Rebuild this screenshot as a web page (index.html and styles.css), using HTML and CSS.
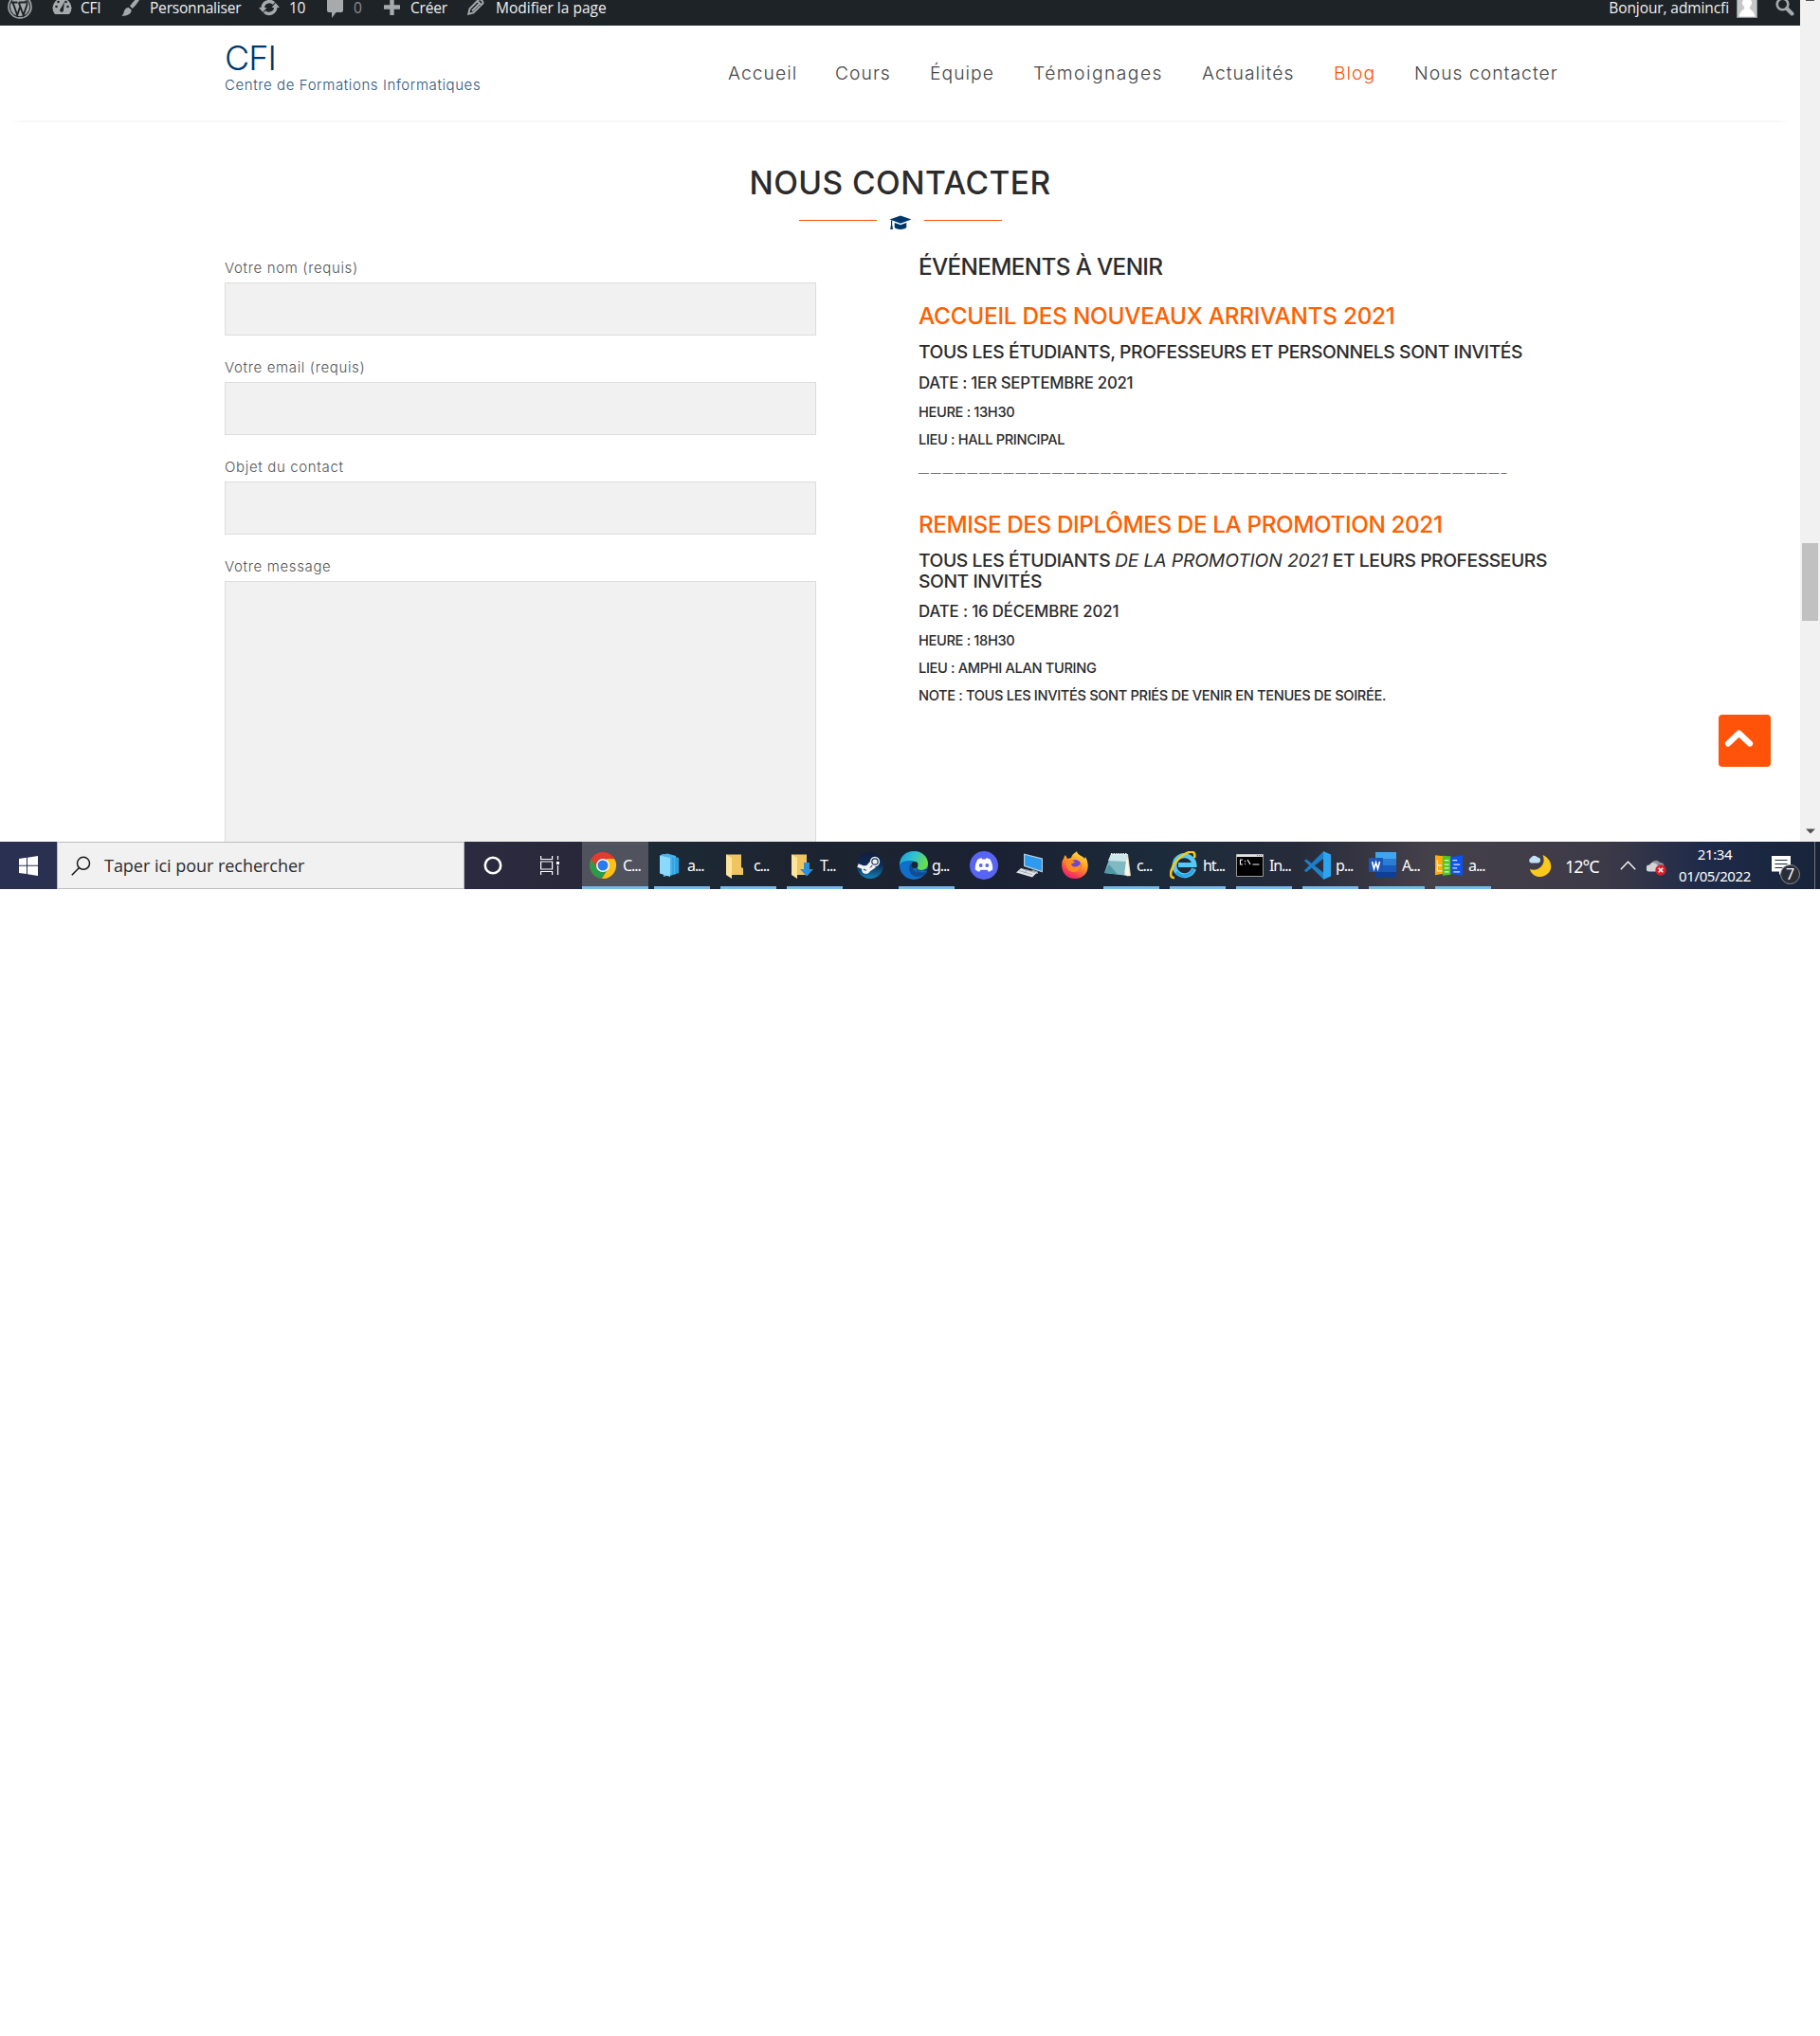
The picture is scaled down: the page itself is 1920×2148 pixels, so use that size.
FILE: index.html
```html
<!DOCTYPE html>
<html lang="fr">
<head>
<meta charset="utf-8">
<title>CFI – Nous contacter</title>
<link rel="stylesheet" href="styles.css">
</head>
<body>
<div class="screen">
  <div class="viewport">
    <div class="page">
      <div class="adminbar">
        <div class="ab-item ab-logo">
          <svg width="26" height="26" viewBox="0 0 26 26"><circle cx="13" cy="13" r="12" fill="none" stroke="#a7aaad" stroke-width="1.6"/><circle cx="13" cy="13" r="10.2" fill="#a7aaad"/><path d="M3.5 8.5h7M12 8.5h7M5.5 8.5l4.7 13.5 3-9M11.700 8.500l5 13.500 3.800-11c.6-2-.8-3-1.300-4.500" fill="none" stroke="#1d2327" stroke-width="1.9"/></svg>
        </div>
        <div class="ab-item ab-site">
          <svg width="21" height="21" viewBox="0 0 21 21"><path d="M3 20a10 10 0 1 1 15 0z" fill="#a7aaad"/><g fill="#1d2327"><circle cx="4.500" cy="12" r="1.300"/><circle cx="6.500" cy="7" r="1.300"/><circle cx="16.500" cy="12" r="1.300"/><circle cx="14.500" cy="7" r="1.300"/><path d="M13 7l-1 8a2 2 0 1 1-3-1z"/></g></svg>
          <span>CFI</span>
        </div>
        <div class="ab-item ab-custom">
          <svg width="21" height="22" viewBox="0 0 21 22"><path d="M20.500 0c.8 1-4.500 9.500-8.700 12.900L9 10.500C12 6.200 18.500-.8 20.500 0zM7.800 12l2.800 2.600c.3 4-4.600 6.400-10.600 6.200 2.800-1.700 2.200-3.400 3.300-5.800C4.200 13 6 11.700 7.800 12z" fill="#a7aaad"/></svg>
          <span>Personnaliser</span>
        </div>
        <div class="ab-item ab-updates">
          <svg width="22" height="20" viewBox="0 0 22 20"><g fill="none" stroke="#a7aaad" stroke-width="3.400"><path d="M4.200 10.500A7 7 0 0 1 16 5.500"/><path d="M17.800 9.500A7 7 0 0 1 6 14.500"/></g><path d="M0 10h8.500l-4.200 5zM22 10h-8.500l4.200-5z" fill="#a7aaad"/></svg>
          <span>10</span>
        </div>
        <div class="ab-item ab-comments">
          <svg width="17" height="22" viewBox="0 0 17 22"><path d="M2 0h13a2 2 0 0 1 2 2v12a2 2 0 0 1-2 2H9.500L5 22v-6H2a2 2 0 0 1-2-2V2a2 2 0 0 1 2-2z" fill="#a7aaad"/></svg>
          <span>0</span>
        </div>
        <div class="ab-item ab-new">
          <svg width="17" height="17" viewBox="0 0 17 17"><path d="M6.300 0h4.400v6.300H17v4.400h-6.300V17H6.300v-6.300H0V6.300h6.300z" fill="#a7aaad"/></svg>
          <span>Créer</span>
        </div>
        <div class="ab-item ab-edit">
          <svg width="18" height="18" viewBox="0 0 18 18"><path d="M12 1.500c1.500-1.200 5.300 2 4.300 4.200L6.500 15.500l-5.300 1.300 1.300-5.500zM5 13.500l8.500-8.500M10.500 3l4.500 4.500" fill="none" stroke="#a7aaad" stroke-width="1.900"/></svg>
          <span>Modifier la page</span>
        </div>
        <div class="ab-item ab-account">
          <span>Bonjour, admincfi</span>
          <svg width="22" height="22" viewBox="0 0 22 22"><path d="M0 0h22v22H0z" fill="#8c8f94"/><path d="M1 0h20v21H1z" fill="#c6c6c6"/><path d="M11 1a5 5 0 0 1 3.500 8.500L13.500 12c3 1.500 5.500 5 5.800 8.500H2.700C3 17 5.500 13.500 8.500 12L7.500 9.500A5 5 0 0 1 11 1z" fill="#fff"/></svg>
        </div>
        <div class="ab-item ab-search">
          <svg width="20" height="20" viewBox="0 0 20 20"><circle cx="7.500" cy="7.500" r="5.800" fill="none" stroke="#a7aaad" stroke-width="2.600"/><path d="M12 12l5.500 5.500" stroke="#a7aaad" stroke-width="4" stroke-linecap="round"/></svg>
        </div>
      </div>

      <header class="header">
        <div class="brand">
          <div class="brand-name">CFI</div>
          <div class="brand-tagline">Centre de Formations Informatiques</div>
        </div>
        <nav class="nav">
          <a>Accueil</a><a>Cours</a><a>Équipe</a><a class="wide">Témoignages</a><a>Actualités</a><a class="active">Blog</a><a>Nous contacter</a>
        </nav>
      </header>

      <main class="contact">
        <h2 class="title">NOUS CONTACTER</h2>
        <div class="divider">
          <i></i>
          <svg width="24" height="16" viewBox="0 0 24 16"><path d="M12 .5L23.500 4.500 12 8.700.5 4.500z" fill="#00376b"/><path d="M5.700 8l6.300 2.300L18.300 8v4.500c0 3.300-12.600 3.300-12.600 0zM2 5.500h1.200v4.200L4 15H1.200L2 9.700z" fill="#00376b"/></svg>
          <i></i>
        </div>
        <div class="columns">
          <form class="form">
            <label>Votre nom (requis)</label><div class="field"></div>
            <label>Votre email (requis)</label><div class="field"></div>
            <label>Objet du contact</label><div class="field"></div>
            <label>Votre message</label><div class="field field-area"></div>
          </form>
          <section class="events">
            <h3 class="events-heading">ÉVÉNEMENTS À VENIR</h3>
            <h3 class="event-title">ACCUEIL DES NOUVEAUX ARRIVANTS 2021</h3>
            <h4>TOUS LES ÉTUDIANTS, PROFESSEURS ET PERSONNELS SONT INVITÉS</h4>
            <h5>DATE : 1ER SEPTEMBRE 2021</h5>
            <h6>HEURE : 13H30</h6>
            <h6>LIEU : HALL PRINCIPAL</h6>
            <p class="separator">————————————————————————————————————————————————–</p>
            <h3 class="event-title second">REMISE DES DIPLÔMES DE LA PROMOTION 2021</h3>
            <h4>TOUS LES ÉTUDIANTS <em>DE LA PROMOTION 2021</em> ET LEURS PROFESSEURS<br>SONT INVITÉS</h4>
            <h5 class="tight">DATE : 16 DÉCEMBRE 2021</h5>
            <h6>HEURE : 18H30</h6>
            <h6>LIEU : AMPHI ALAN TURING</h6>
            <h6>NOTE : TOUS LES INVITÉS SONT PRIÉS DE VENIR EN TENUES DE SOIRÉE.</h6>
          </section>
        </div>
      </main>
      <div class="to-top">
        <svg width="31" height="20" viewBox="0 0 31 20"><path d="M4 15.500L15.500 4.500 27 15.500" fill="none" stroke="#fff" stroke-width="6.200" stroke-linecap="round" stroke-linejoin="round"/></svg>
      </div>
    </div>
    <div class="scrollbar">
      <div class="scroll-up"></div>
      <div class="scroll-thumb"></div>
      <svg class="scroll-down" width="10" height="6" viewBox="0 0 10 6"><path d="M0 .5h10L5 5.500z" fill="#505050"/></svg>
    </div>
  </div>

  <div class="taskbar">
    <div class="start">
      <svg width="20" height="21" viewBox="0 0 20 21"><path d="M0 3l8-1.200v8H0zM9 1.700L20 0v9.800H9zM0 10.800h8v8.300L0 18zM9 10.800h11V21L9 19.300z" fill="#fff"/></svg>
    </div>
    <div class="search">
      <svg width="21" height="21" viewBox="0 0 21 21"><circle cx="13" cy="7.800" r="6.500" fill="none" stroke="#1a1a1a" stroke-width="1.500"/><path d="M8.500 12.500L.8 20.200" stroke="#1a1a1a" stroke-width="1.600"/></svg>
      <span>Taper ici pour rechercher</span>
    </div>
    <div class="sys"><svg width="20" height="20" viewBox="0 0 20 20"><circle cx="10" cy="10" r="8.200" fill="none" stroke="#fff" stroke-width="2.600"/></svg></div>
    <div class="sys sys-view"><svg width="20" height="20" viewBox="0 0 20 20"><path d="M.6 0v3.500h12V0M.6 20v-3.500h12V20M.6 6h12v8H.6zM18.500 0v4M18.500 10v10" fill="none" stroke="#fff" stroke-width="1.200"/><path d="M17 6h3v3h-3z" fill="#fff"/></svg></div>

    <div class="task task-active">
      <svg width="30" height="30" viewBox="0 0 30 30"><circle cx="14" cy="15" r="14" fill="#e53a2e"/><path d="M1.900 8a14 14 0 0 0 11.100 21l6-10.500H9z" fill="#2a9b48"/><path d="M26.100 8A14 14 0 0 1 13 29l7-11.500L17.500 8z" fill="#fbc116"/><path d="M1.900 8L8 18.500 14 8z" fill="#e53a2e"/><circle cx="14" cy="15" r="7" fill="#fff"/><circle cx="14" cy="15" r="5.500" fill="#2a7bea"/></svg>
      <span>C...</span>
    </div>
    <div class="task">
      <svg width="30" height="30" viewBox="0 0 30 30"><path d="M10 3l16 4v16l-9 3z" fill="#2aa5e6"/><path d="M8 3l10 2.500v19L10 27z" fill="#56bdf3"/><path d="M6 4.500l8-2 9 2.500v19l-5 1z" fill="#48b4ef"/><path d="M6 4.500L17 7v20L6 23.500z" fill="#8bd9fd"/><path d="M20 7v18M23 7v17" stroke="#218bc8" stroke-width=".8"/></svg>
      <span>a...</span>
    </div>
    <div class="task">
      <svg width="30" height="30" viewBox="0 0 30 30"><path d="M6 3.500h16V17l2 1v7H8z" fill="#eec560"/><path d="M6 3.500l6 3.500v22l-6-4z" fill="#ffe59b"/></svg>
      <span>c...</span>
    </div>
    <div class="task">
      <svg width="30" height="30" viewBox="0 0 30 30"><path d="M5 3.500h16V17l2 1v7H7z" fill="#eec560"/><path d="M5 3.500L11 7v22l-6-4z" fill="#ffe59b"/><path d="M18 12h6v7h4l-7 7.500-7-7.500h4z" fill="#2d8ee0"/></svg>
      <span>T...</span>
    </div>
    <div class="launcher">
      <svg width="28" height="28" viewBox="0 0 28 28"><defs><linearGradient id="st" x1="0" y1="0" x2="0" y2="1"><stop offset="0" stop-color="#111d3e"/><stop offset=".5" stop-color="#0f2c57"/><stop offset="1" stop-color="#1381b8"/></linearGradient></defs><circle cx="14" cy="14" r="14" fill="url(#st)"/><path d="M1 14l9 3.500 5-6" fill="none" stroke="#f2f2f2" stroke-width="4"/><circle cx="9.500" cy="18.500" r="4" fill="#f2f2f2" stroke="#f2f2f2"/><path d="M7 18l4 2" stroke="#194068" stroke-width="1.200"/><path d="M10 21l9-6" stroke="#f2f2f2" stroke-width="3"/><circle cx="19" cy="10" r="5.200" fill="#f2f2f2"/><circle cx="19" cy="10" r="3.200" fill="none" stroke="#173660" stroke-width="1.200"/></svg>
    </div>
    <div class="task task-edge">
      <svg width="30" height="30" viewBox="0 0 30 30"><defs><linearGradient id="eg" x1="0" y1="0" x2="1" y2=".4"><stop offset="0" stop-color="#1a98d8"/><stop offset=".5" stop-color="#2fc1d4"/><stop offset="1" stop-color="#66dd4f"/></linearGradient></defs><circle cx="15" cy="15" r="15" fill="#0f6fc9"/><path d="M0 13C1 5 7 0 15 0c9 0 15 6 15 13 0 5-4 7-8 7-3 0-5-1-3-3 1-4-2-7-7-7-6 0-11 1-12 5z" fill="url(#eg)"/><path d="M11 14c-3 7 2 13 8 13 4 0 7-2 9-5-6 3-14 1-14-6 0-1 .5-3 1-3z" fill="#114c94"/><path d="M19 17c-2 2 0 3.500 3 3.500h8l-.5-2c-2 1.500-4 2-7 1.500-3-.3-4-1-3.500-3z" fill="#1d2636"/><circle cx="16" cy="14.500" r="3.400" fill="#1b2433"/><path d="M17 19.500c3 3.500 8 3.500 12.500 2l-1.500 2.500c-5 2-10 0-11-4.500z" fill="#114c94"/></svg>
      <span>g...</span>
    </div>
    <div class="launcher">
      <svg width="30" height="30" viewBox="0 0 30 30"><circle cx="15" cy="15" r="15" fill="#5865f2"/><path d="M8.500 8.500c2-1 3.500-1.300 4.200-1.300l.6 1.200h3.400l.6-1.200c.7 0 2.200.3 4.200 1.300 2 3.500 3 7 2.700 11-1.600 1.300-3 1.900-4.400 2.200l-1.200-2h-7.200l-1.200 2c-1.400-.3-2.800-.9-4.400-2.200-.3-4 .7-7.500 2.700-11z" fill="#fff"/><circle cx="11.700" cy="15" r="1.900" fill="#5865f2"/><circle cx="18.300" cy="15" r="1.900" fill="#5865f2"/></svg>
    </div>
    <div class="launcher">
      <svg width="28" height="28" viewBox="0 0 28 28"><path d="M8 1.500l20 5v15L8 15z" fill="#b9cede"/><path d="M9.200 3L27 7.500v12.300L9.200 14z" fill="#2d9cf0"/><path d="M17 18.500l6 2v2.500l-8-2z" fill="#8c9aa5"/><path d="M5 17l17 4.500-5 5L0 21.500z" fill="#e1e5e8"/><path d="M3 19.500l14 4M7 18l13 3.500M8 22.500l5-5" stroke="#8c969e" stroke-width=".7"/></svg>
    </div>
    <div class="launcher">
      <svg width="28" height="30" viewBox="0 0 28 30"><defs><linearGradient id="ff" x1=".8" y1="0" x2=".3" y2="1"><stop offset="0" stop-color="#ffe84a"/><stop offset=".45" stop-color="#ff9a24"/><stop offset=".8" stop-color="#fb4050"/><stop offset="1" stop-color="#e42078"/></linearGradient></defs><path d="M4 4l2 4 4-1c1-4 4-5 6-7 0 4 7 5 8 8l1-2c6 10 2 23-11 23C3 29-2 19 1 9c1 1 1-3 3-5z" fill="url(#ff)"/><circle cx="14.500" cy="15" r="6" fill="#7542d6"/><path d="M5 9c4-1 6 2 9 2-1 2-4 2-4 3 2 4 8 3 10-1 1 6-3 9-7 9-7 0-9-6-8-13z" fill="#ff8c22"/></svg>
    </div>
    <div class="task">
      <svg width="30" height="30" viewBox="0 0 30 30"><path d="M9 3h17l3 23-4 .5z" fill="#e3d5a8"/><path d="M8 3h17l-3 22.500L1 23z" fill="#7fb9c2"/><path d="M8 3h17l-1 8L5 10z" fill="#cde8ea"/><path d="M22 25.500L25 4l3 22z" fill="#f5f5f0"/><path d="M1 23l5-9 9 10.500z" fill="#4f98a6"/><path d="M8 3h17" stroke="#eee" stroke-width="2" stroke-dasharray="1.500 1"/></svg>
      <span>c...</span>
    </div>
    <div class="task">
      <svg width="30" height="30" viewBox="0 0 30 30"><path d="M25.500 18.500A10.500 10.500 0 1 1 26 14.500H9" fill="none" stroke="#55c8f7" stroke-width="5"/><path d="M25 19a10.500 10.500 0 0 1-18 3" fill="none" stroke="#2ba6e4" stroke-width="3"/><path d="M5 28C-3 29 2 13 13 5c8-6 15-6 13 2" fill="none" stroke="#f7c81d" stroke-width="2.600"/></svg>
      <span>ht...</span>
    </div>
    <div class="task">
      <svg width="30" height="30" viewBox="0 0 30 30"><path d="M.5 3.500h28v23H.5z" fill="#000" stroke="#999"/><path d="M.5 3.500h28v2.500H.5z" fill="#e4e4e4"/><path d="M22 4.700h5" stroke="#666" stroke-dasharray="1 1"/><path d="M7 9H4.500v5H7M9.500 10v1.200M9.500 13v1M12 9l3 5M17.500 14h7" fill="none" stroke="#eee" stroke-width="1.200"/></svg>
      <span>In...</span>
    </div>
    <div class="task">
      <svg width="30" height="30" viewBox="0 0 30 30"><path d="M2 10l2-1.500L24 24l-2 5.500z" fill="#1f83cc"/><path d="M2 20.500L4 22 24 6 22 .5z" fill="#0d70ba"/><path d="M22 0l8 3.500v23L22 30z" fill="#2ea3ee"/><path d="M2 20.500L22 .5V8L4 22z" fill="#1a7fc9"/></svg>
      <span>p...</span>
    </div>
    <div class="task">
      <svg width="30" height="30" viewBox="0 0 30 30"><path d="M7 1h22v7H7z" fill="#41a5ee"/><path d="M7 8h22v7H7z" fill="#2b7cd3"/><path d="M7 15h22v7H7z" fill="#185abd"/><path d="M7 22h22v6H7z" fill="#103f91"/><rect x="0" y="7" width="15" height="15" rx="1" fill="#1b56b5"/><path d="M3.500 11l2 7.500 2-6.500 2 6.500 2-7.500" fill="none" stroke="#fff" stroke-width="1.600"/></svg>
      <span>A...</span>
    </div>
    <div class="task">
      <svg width="31" height="30" viewBox="0 0 31 30"><path d="M0 4l9 1v19l-9 1.500z" fill="#ffab0a"/><path d="M8 4.500l9 .5v20l-9 1z" fill="#50c81e"/><path d="M17 6l13-2v22l-13-2z" fill="#0d51f2"/><path d="M2.500 9v12h5M3 15h4M10 9.500h5M10 14h5M10 18h5M10 22h5M19 9.500h5M20 14h7M19 18h5M20 22h7" fill="none" stroke="#fff" stroke-opacity=".85" stroke-width="1.300"/></svg>
      <span>a...</span>
    </div>

    <div class="tray">
      <svg class="weather" width="25" height="25" viewBox="0 0 25 25"><path d="M15.500 1c12 5 12 21-2 23C8 24.500 3 21 2 16c8 3 18-4 13.500-15z" fill="#fbc91c"/><path d="M3 9.500a3 3 0 0 1 0-5.500 4 4 0 0 1 7-.5 3 3 0 0 1 0 6z" fill="#c3e1f8"/></svg>
      <span class="temp">12°C</span>
      <svg class="chevron" width="17" height="10" viewBox="0 0 17 10"><path d="M.8 9.200L8.500 1.300 16.200 9.200" fill="none" stroke="#fff" stroke-width="1.300"/></svg>
      <svg class="cloud" width="21" height="18" viewBox="0 0 21 18"><path d="M5 8a5 5 0 0 1 9-4 4 4 0 0 1 1 8H5z" fill="#8f9296"/><path d="M3 13.500a3.500 3.500 0 0 1 0-7 5 5 0 0 1 9 1l2 6z" fill="#d2d4d6"/><circle cx="15" cy="12" r="5.700" fill="#d81f2c"/><path d="M12.700 9.700l4.600 4.600M17.300 9.700l-4.600 4.600" stroke="#fff" stroke-width="1.600"/></svg>
      <div class="clock"><span>21:34</span><span>01/05/2022</span></div>
      <div class="notif">
        <svg width="20" height="20" viewBox="0 0 20 20"><path d="M0 0h20v16.500h-8.500L8 20v-3.500H0z" fill="#fff"/><path d="M3.500 4.500h13M3.500 8.500h13M3.500 12.500h8" stroke="#1c2844" stroke-width="1.100"/></svg>
        <span class="badge">7</span>
      </div>
      <div class="peek"></div>
    </div>
  </div>
</div>
</body>
</html>
```
FILE: styles.css
```css
* { box-sizing: border-box; }

body {
  margin: 0;
  background: #fff;
  font-family: "Inter", "Liberation Sans", sans-serif;
}

svg { display: block; flex: none; }

.screen { width: 1920px; height: 938px; overflow: hidden; }
.viewport { display: flex; height: 888px; }
.page { position: relative; width: 1899px; height: 888px; overflow: hidden; }

/* WordPress admin bar */
.adminbar {
  display: flex;
  height: 27px;
  padding-left: 8px;
  background: #1d2327;
  color: #f0f0f1;
  font: 15.5px/16px "Open Sans", "Noto Sans", sans-serif;
  white-space: nowrap;
}
.ab-item { display: flex; height: 20px; gap: 9px; }
.ab-logo { width: 47px; }
.ab-logo svg { margin-top: -6px; }
.ab-site { width: 73px; letter-spacing: -.3px; }
.ab-site svg { margin-top: -5px; }
.ab-custom { width: 145px; letter-spacing: -.2px; }
.ab-custom svg { margin-top: -4px; }
.ab-updates { width: 72px; gap: 10px; letter-spacing: -.3px; }
.ab-updates svg { margin-top: -2px; }
.ab-comments { width: 60px; gap: 11px; }
.ab-comments svg { margin-top: -3px; }
.ab-comments span { color: #8c8f94; }
.ab-new { width: 88px; gap: 11px; letter-spacing: -.2px; }
.ab-new svg { margin-top: -1px; }
.ab-edit { gap: 12px; }
.ab-edit svg { margin-top: -2px; }
.ab-account { margin-left: auto; gap: 8px; letter-spacing: -.1px; }
.ab-account svg { margin-top: -3px; }
.ab-search { width: 45px; padding-left: 19px; }
.ab-search svg { margin-top: -3px; }

/* Site header */
.header {
  display: flex;
  align-items: center;
  height: 100px;
  padding-left: 237px;
}
.header::after {
  content: "";
  flex: none;
  align-self: flex-end;
  width: 1877px;
  height: 2px;
  margin: 0 0 -2px -1637px;
  background: linear-gradient(90deg, #fff, #f7f7f7 15px, #f7f7f7 1862px, #fff);
}
.brand { width: 531px; flex: none; align-self: flex-start; padding-top: 16px; color: #00376b; white-space: nowrap; }
.brand-name { font-size: 36px; line-height: 36px; font-weight: 300; letter-spacing: -.9px; }
.brand-tagline { font-size: 15px; line-height: 22px; font-weight: 300; letter-spacing: .59px; opacity: .85; }
.nav {
  display: grid;
  flex: none;
  width: 880px;
  grid-template-columns: 113px 100px 109px 178px 139px 85px 156px;
  font-size: 19.3px;
  line-height: 30px;
  font-weight: 300;
  letter-spacing: 1.03px;
  color: #444;
  white-space: nowrap;
}
.nav .wide { letter-spacing: 1.45px; }
.nav .active { color: #ff5309; }

/* Contact section */
.contact { padding-top: 46px; color: #2b2b2b; }
.title {
  margin: 0;
  font-size: 33.5px;
  line-height: 40px;
  font-weight: 450;
  letter-spacing: .45px;
  text-align: center;
}
.divider { display: flex; justify-content: center; gap: 13px; height: 22px; margin-top: 11px; }
.divider i { width: 82px; height: 1px; margin-top: 8px; background: #ff5309; }
.divider svg { width: 24px; margin-top: 3px; }
.columns { display: flex; margin-top: 20px; padding-left: 237px; }
.form { width: 624px; padding-top: 2px; }
.form label {
  display: block;
  font-size: 15px;
  line-height: 30px;
  font-weight: 300;
  letter-spacing: .65px;
  color: #555;
}
.field { height: 56px; margin-bottom: 19px; background: #f1f1f1; border: 1px solid #ddd; }
.field-area { height: 300px; margin: 0; }

.events { margin-left: 108px; width: 680px; white-space: nowrap; }
.events h3, .events h4, .events h5, .events h6, .separator { margin: 12px 0 0; font-weight: 450; }
.events h3 { font-size: 24.3px; line-height: 30px; }
.events .events-heading { margin: 0; letter-spacing: -.65px; }
.events .event-title { margin-top: 22px; color: #ff6000; letter-spacing: -.24px; }
.events .event-title.second { margin-top: 30px; letter-spacing: -.4px; }
.events h4 { font-size: 19.3px; line-height: 22px; letter-spacing: -.42px; }
.events h4 em { letter-spacing: -.12px; }
.events h5 { font-size: 16.8px; line-height: 20px; letter-spacing: -.25px; }
.events h5.tight { margin-top: 11px; letter-spacing: -.12px; }
.events h6 { font-size: 14.6px; line-height: 18px; letter-spacing: -.33px; }
.events h6 + h6 { margin-top: 11px; }
.events .separator { margin-top: 15px; font: 300 11px/20px "Liberation Sans", sans-serif; letter-spacing: 1.8px; color: #555; }

.to-top {
  position: absolute;
  left: 1813px;
  top: 754px;
  width: 55px;
  height: 55px;
  padding: 15px 0 0 6px;
  border-radius: 4px;
  background: #ff5309;
}

.scrollbar { display: flex; flex-direction: column; align-items: center; width: 21px; background: #f1f1f1; }
.scroll-up { width: 9px; height: 1px; background: #505050; }
.scroll-thumb { width: 17px; height: 82px; margin-top: 572px; background: #c1c1c1; }
.scroll-down { margin-top: 219px; }

/* Windows taskbar */
.taskbar {
  display: flex;
  height: 50px;
  color: #fff;
  font: 15px/20px "Noto Sans", sans-serif;
  white-space: nowrap;
  background: linear-gradient(90deg, #2a3052 0, #2a3050 60px, #2b2b40 500px, #29283a 610px, #1c2a36 690px, #1d2430 830px, #1a2132 1060px, #1c2b3b 1230px, #262b3a 1370px, #45414a 1510px, #3d3a48 1690px, #1e2a49 1800px, #172438 1920px);
}
.start { display: flex; align-items: center; width: 60px; padding-left: 20px; }
.search {
  display: flex;
  align-items: center;
  width: 430px;
  padding-left: 14px;
  gap: 14px;
  background: #f1f1f1;
  border: 1px solid #bcbcbc;
  color: #2b2b2b;
  font: 18px/24px "Open Sans", sans-serif;
  letter-spacing: -.03px;
}
.sys { display: flex; align-items: center; justify-content: center; width: 60px; }
.sys-view { margin-right: 4px; }
.task {
  display: flex;
  align-items: center;
  width: 59px;
  margin: 0 5px 0 6px;
  gap: 5px;
  border-bottom: 3px solid #76b9ed;
  font-size: 16px;
  letter-spacing: -1.1px;
}
.task svg { margin-top: 3px; width: 30px; }
.task span { margin-top: 3px; }
.task-active { width: 70px; margin: 0; padding-left: 8px; background: #50525d; }
.task-edge { margin-right: 7px; }
.task-edge svg { margin-left: 1px; }
.task-edge span { margin-left: -1px; }
.launcher { display: flex; align-items: center; justify-content: center; width: 48px; }

.tray { display: flex; align-items: center; margin-left: 34px; }
.temp { width: 35px; margin: 2px 0 0 14px; font-size: 18px; letter-spacing: -1px; }
.chevron { margin-left: 23px; }
.cloud { margin: 3px 0 0 11px; }
.clock { display: flex; flex-direction: column; width: 80px; margin-left: 11px; gap: 3px; margin-top: -1px; text-align: center; letter-spacing: -.4px; }
.notif { position: relative; margin-left: 20px; }
.badge {
  position: absolute;
  left: 9px;
  top: 9px;
  width: 21px;
  height: 21px;
  border: 1px solid #8b8e95;
  border-radius: 50%;
  background: #2b2e36;
  font-size: 16px;
  line-height: 19px;
  text-align: center;
}
.peek { width: 1px; height: 50px; margin-left: 25px; background: #70747f; }
```
